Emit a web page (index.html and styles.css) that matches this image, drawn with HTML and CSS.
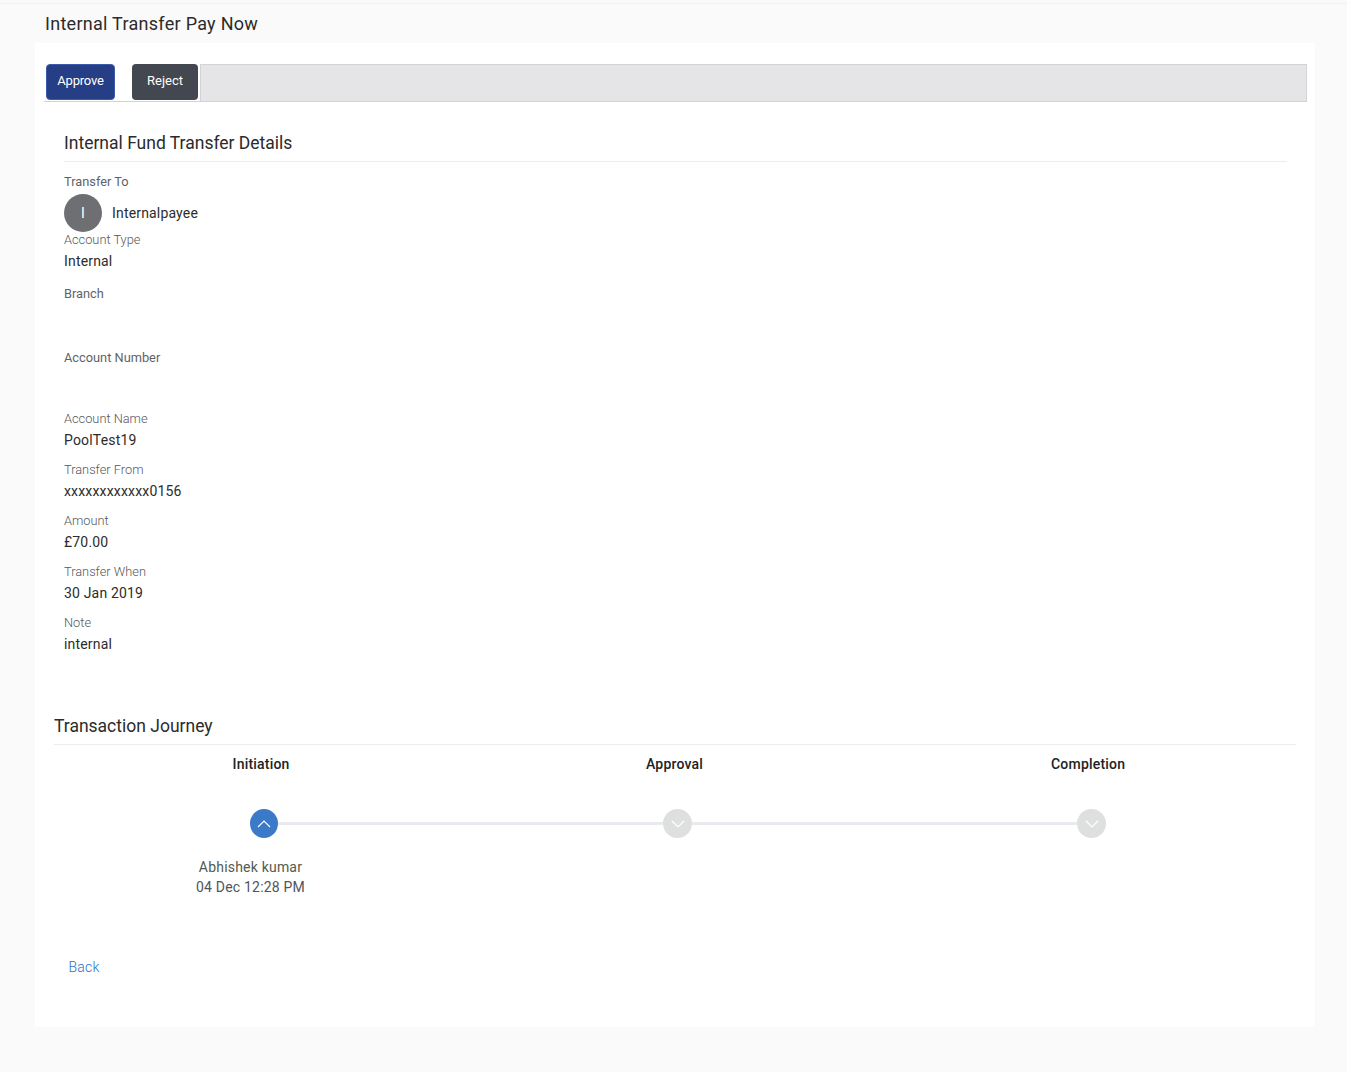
FILE: index.html
```html
<!DOCTYPE html>
<html lang="en">
<head>
<meta charset="utf-8">
<title>Internal Transfer Pay Now</title>
<link rel="stylesheet" href="styles.css">
</head>
<body>
<header class="page-head"><h1>Internal Transfer Pay Now</h1></header>
<main class="card">
  <div class="toolbar">
    <button class="btn btn-primary">Approve</button>
    <button class="btn btn-secondary">Reject</button>
    <div class="toolbar-fill"></div>
  </div>
  <section class="details">
    <h2 class="section-title">Internal Fund Transfer Details</h2>
    <div class="label l-to">Transfer To</div>
    <div class="payee"><span class="avatar">I</span><span class="value">Internalpayee</span></div>
    <div class="label label-light l-type">Account Type</div>
    <div class="value v-type">Internal</div>
    <div class="label l-branch">Branch</div>
    <div class="label l-number">Account Number</div>
    <div class="label label-light l-name">Account Name</div>
    <div class="value v-std">PoolTest19</div>
    <div class="label label-light l-std">Transfer From</div>
    <div class="value v-std">xxxxxxxxxxxx0156</div>
    <div class="label label-light l-std">Amount</div>
    <div class="value v-std">£70.00</div>
    <div class="label label-light l-std">Transfer When</div>
    <div class="value v-std">30 Jan 2019</div>
    <div class="label label-light l-std">Note</div>
    <div class="value v-std">internal</div>
  </section>
  <section class="journey">
    <h2 class="section-title">Transaction Journey</h2>
    <div class="steps">
      <div class="step-name s1">Initiation</div>
      <div class="step-name s2">Approval</div>
      <div class="step-name s3">Completion</div>
    </div>
    <div class="track">
      <span class="dot dot-active"><svg width="14" height="8" viewBox="0 0 14 8"><path d="M1 7 7 1l6 6" fill="none" stroke="#fff" stroke-width="1.2"/></svg></span>
      <span class="line"></span>
      <span class="dot"><svg width="14" height="8" viewBox="0 0 14 8"><path d="M1 1l6 6 6-6" fill="none" stroke="#fff" stroke-width="1.2"/></svg></span>
      <span class="line"></span>
      <span class="dot"><svg width="14" height="8" viewBox="0 0 14 8"><path d="M1 1l6 6 6-6" fill="none" stroke="#fff" stroke-width="1.2"/></svg></span>
    </div>
    <div class="actor">
      <div class="actor-name">Abhishek kumar</div>
      <div class="actor-time">04 Dec 12:28 PM</div>
    </div>
  </section>
  <a class="back" href="#">Back</a>
</main>
</body>
</html>
```
FILE: styles.css
```css
* { box-sizing: border-box; }
html, body { margin: 0; padding: 0; }
body {
  height: 1072px;
  background: #fafafa;
  font-family: Roboto, "Liberation Sans", sans-serif;
  color: #2c2c2c;
  padding-top: 3px;
  overflow: hidden;
}
h1, h2 { margin: 0; font-weight: 400; }
.page-head {
  border-top: 1px solid #f0f0f0;
  height: 40px;
  padding: 9px 0 0 45px;
}
.page-head h1 { font-size: 18px; line-height: 22px; color: #2b2b2b; letter-spacing: .28px; }
.card {
  margin: 0 32px 0 35px;
  height: 984px;
  background: #fff;
  padding: 21px 8px 0 9px;
}
.toolbar { display: flex; height: 38px; align-items: flex-start; border-bottom: 1px solid #d3d3d7; }
.btn {
  height: 36px;
  border: 0;
  border-radius: 4px;
  color: #fff;
  font: 13px/16px Roboto, sans-serif;
  padding: 0 0 3px;
  display: block;
}
.btn-primary { width: 69px; margin-left: 2px; background: #263e85; border: 1px solid #3b5aa8; padding-bottom: 3px; letter-spacing: -.2px; }
.btn-secondary { width: 66px; margin-left: 17px; background: #43474f; }
.toolbar-fill {
  flex: 1;
  margin-left: 2px;
  height: 37px;
  background: #e5e5e7;
  border: 1px solid #d3d3d7;
  border-width: 1px 1px 0 1px;
}
.details { padding: 0 20px 0 20px; }
.section-title {
  font-size: 17.5px;
  line-height: 24px;
  color: #2b2b2b;
  padding-bottom: 6px;
  border-bottom: 1px solid #ececec;
}
.details .section-title { margin-top: 29px; }
.label { font-size: 12.8px; line-height: 16px; color: #5f6368; }
.label-light { font-weight: 300; color: #55585c; }
.value { font-size: 14px; line-height: 18px; color: #2c2c2c; letter-spacing: .17px; }
.l-to { margin-top: 12px; }
.payee { display: flex; align-items: center; margin-top: 4px; height: 38px; gap: 10px; }
.avatar {
  width: 38px; height: 38px; border-radius: 50%;
  background: #6d6f72; color: #fff; font-size: 14px;
  display: flex; align-items: center; justify-content: center;
}
.l-type { margin-top: 0; }
.v-type { margin-top: 4px; }
.l-branch { margin-top: 16px; }
.l-number { margin-top: 48px; }
.l-name { margin-top: 45px; }
.v-std { margin-top: 4px; }
.l-std { margin-top: 13px; }
.journey { margin-top: 61px; padding: 0 11px 0 10px; }
.steps { position: relative; height: 38px; }
.step-name { position: absolute; top: 10px; font-size: 14px; line-height: 18px; font-weight: 500; color: #222; letter-spacing: .2px; }
.s1 { left: 178.5px; }
.s2 { left: 592px; }
.s3 { left: 997px; }
.track { display: flex; align-items: center; margin: 26px 0 0 196px; width: 856px; }
.dot {
  width: 29px; height: 29px; border-radius: 50%;
  background: #dedfdf;
  display: flex; align-items: center; justify-content: center;
  flex: none;
}
.dot-active { background: #3b7ac9; width: 28px; }
.line { flex: 1; height: 3px; background: #e9e9ee; }
.actor { margin-top: 19px; width: 393px; text-align: center; font-size: 14px; line-height: 20px; letter-spacing: .2px; }
.actor-name { color: #4f5b52; }
.actor-time { color: #50545c; }
.back {
  display: block;
  margin: 61px 0 0 24.5px;
  font-size: 14px;
  font-weight: 300;
  line-height: 18px;
  color: #2f6fc0;
  text-decoration: none;
  letter-spacing: .2px;
}
```
